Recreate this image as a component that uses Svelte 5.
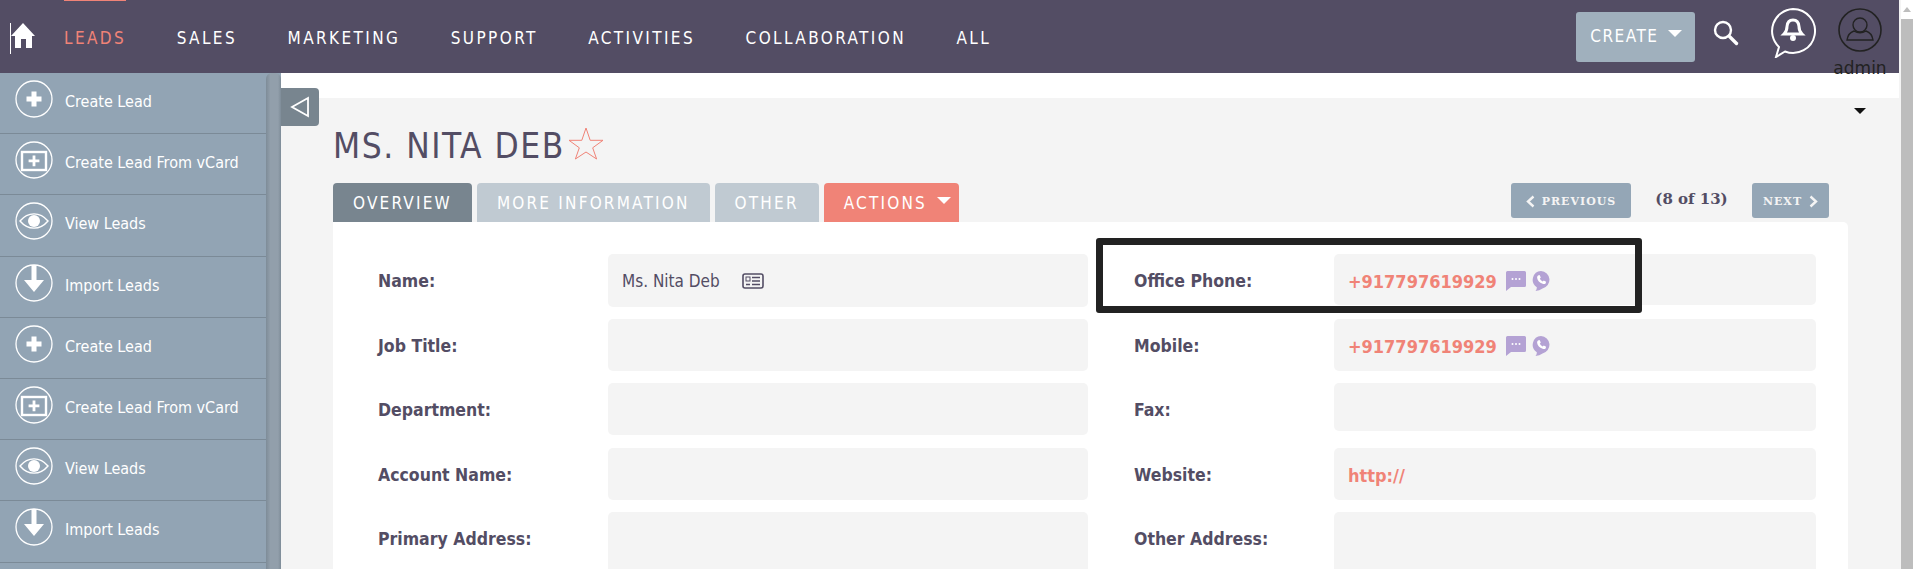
<script>
	const actions = [
		{ label: 'Create Lead', icon: 'plus' },
		{ label: 'Create Lead From vCard', icon: 'card' },
		{ label: 'View Leads', icon: 'eye' },
		{ label: 'Import Leads', icon: 'down' }
	];
	const sidebar = [...actions, ...actions];
	const nav = ['Leads', 'Sales', 'Marketing', 'Support', 'Activities', 'Collaboration', 'All'];
	const tabs = ['Overview', 'More Information', 'Other'];

	const phone = '+917797619929';
	const fields = [
		{ left: 'Name:', leftValue: 'Ms. Nita Deb', right: 'Office Phone:', rightValue: phone, leftH: 53, rightH: 51 },
		{ left: 'Job Title:', right: 'Mobile:', rightValue: phone, leftH: 52, rightH: 52 },
		{ left: 'Department:', right: 'Fax:', leftH: 52, rightH: 48 },
		{ left: 'Account Name:', right: 'Website:', rightValue: 'http://', leftH: 52, rightH: 52 },
		{ left: 'Primary Address:', right: 'Other Address:', leftH: 90, rightH: 90 }
	];
</script>

{#snippet sideIcon(kind)}
	<svg class="side-icon" viewBox="0 0 38 38" width="38" height="38">
		<circle cx="19" cy="19" r="18" fill="none" stroke="#fff" stroke-width="1.3" />
		{#if kind === 'plus'}
			<path d="M16.5 11.5h5v5h5v5h-5v5h-5v-5h-5v-5h5z" fill="#fff" />
		{:else if kind === 'card'}
			<rect x="7" y="11" width="24" height="18" fill="none" stroke="#fff" stroke-width="2.4" />
			<path d="M17.6 14.5h2.8v4h4v2.8h-4v4h-2.8v-4h-4v-2.8h4z" fill="#fff" />
		{:else if kind === 'eye'}
			<path d="M5 19c8-9.500 20-9.500 28 0c-8 9.500-20 9.500-28 0z" fill="none" stroke="#fff" stroke-width="1.4" />
			<circle cx="19" cy="19" r="6" fill="#fff" />
		{:else}
			<path d="M16.500 1h5v15h7.500l-10 12-10-12h7.500z" fill="#fff" />
		{/if}
	</svg>
{/snippet}

{#snippet contactIcons()}
	<svg viewBox="0 0 20 20" width="20" height="20" class="contact">
		<path d="M0 1.500Q0 0 1.500 0h17Q20 0 20 1.500v13q0 1.500-1.500 1.500H5l-5 4z" fill="#b4a2d4" />
		<circle cx="6.500" cy="8" r="1" fill="#fff" /><circle cx="10" cy="8" r="1" fill="#fff" /><circle cx="13.500" cy="8" r="1" fill="#fff" />
	</svg>
	<svg viewBox="0 0 18 20" width="18" height="20" class="contact">
		<path d="M9 0a8.800 8.800 0 0 1 1.500 17.400q-3 2.400-7 2.600q1.500-1.500 1.300-3.800A8.800 8.800 0 0 1 9 0z" fill="#b4a2d4" />
		<path d="M6 4.500l1.600-.4 1.200 2.500-1 1.100q.9 1.800 2.900 2.800l1.100-1 2.300 1.300-.5 1.600q-1.200 1-3 .4-4.800-1.800-5.500-6.100-.1-1.300.9-2.200z" fill="#fff" />
	</svg>
{/snippet}

<div class="screen">
	<div class="page">
		<header class="topbar">
			<svg class="home" viewBox="0 0 26 31" width="26" height="31">
				<path d="M.5 0v31" stroke="#fff" stroke-width="1" />
				<path d="M13 0L25 13h-3v12h-6v-9h-5v9H5V13H1z" fill="#fff" />
			</svg>
			<nav class="nav">
				{#each nav as item, i}
					<a class="nav-link" class:current={i === 0} href="#top">{item}</a>
				{/each}
			</nav>
			<div class="top-right">
				<button class="create">Create <span class="caret"></span></button>
				<svg class="search" viewBox="0 0 26 26" width="26" height="26">
					<circle cx="10" cy="10" r="8" fill="none" stroke="#fff" stroke-width="2.400" />
					<path d="M16.500 16.500l7 7" stroke="#fff" stroke-width="3.400" stroke-linecap="round" />
				</svg>
				<svg class="bell" viewBox="0 0 46 50" width="46" height="50">
					<path d="M23 1a22 22 0 1 1-8 42.500L6 49l3-10A22 22 0 0 1 23 1z" fill="none" stroke="#fff" stroke-width="2" />
					<path d="M23 12q5.500 0 6 6.500 0 4.500 3 7.500H14q3-3 3-7.500q.5-6.500 6-6.500z" fill="none" stroke="#fff" stroke-width="3" />
					<circle cx="23" cy="30" r="3" fill="#fff" />
				</svg>
				<div class="user">
					<svg viewBox="0 0 44 44" width="44" height="44">
						<circle cx="22" cy="22" r="21" fill="none" stroke="#222" stroke-width="1.600" />
						<circle cx="22" cy="17" r="7" fill="none" stroke="#222" stroke-width="1.400" />
						<path d="M9 32q1-7 7-9q6 3.500 12 0q6 2 7 9z" fill="none" stroke="#222" stroke-width="1.400" />
					</svg>
					<span class="user-name">admin</span>
				</div>
			</div>
		</header>

		<div class="body">
			<aside class="sidebar">
				<ul class="side-list">
					{#each sidebar as item}
						<li class="side-item">
							{@render sideIcon(item.icon)}
							<span>{item.label}</span>
						</li>
					{/each}
				</ul>
				<div class="side-scroll"></div>
			</aside>

			<main class="main">
				<button class="toggle" aria-label="Hide sidebar">
					<svg viewBox="0 0 20 22" width="20" height="22">
						<path d="M18 2v18L2 11z" fill="none" stroke="#fff" stroke-width="1.800" />
					</svg>
				</button>
				<div class="strip"></div>
				<span class="user-caret"></span>
				<h1 class="title">MS. NITA DEB<svg viewBox="0 0 36 33" width="36" height="33">
						<path d="M18 1l4.200 12.300H35l-10.300 7.500L28.600 32 18 25 7.400 32l3.900-11.200L1 13.300h12.800z" fill="none" stroke="#f08377" stroke-width="1" />
					</svg>
				</h1>
				<div class="tab-row">
					<div class="tabs">
						{#each tabs as tab, i}
							<button class="tab" class:active={i === 0}>{tab}</button>
						{/each}
						<button class="tab action">Actions <span class="caret"></span></button>
					</div>
					<div class="pager">
						<button class="pager-btn prev">
							<svg viewBox="0 0 9 13" width="9" height="13"><path d="M7.500 1.500L2 6.500l5.500 5" fill="none" stroke="#f4f4f4" stroke-width="2.400" /></svg>
							Previous
						</button>
						<span class="count">(8 of 13)</span>
						<button class="pager-btn next">
							Next
							<svg viewBox="0 0 9 13" width="9" height="13"><path d="M1.500 1.500L7 6.500l-5.500 5" fill="none" stroke="#f4f4f4" stroke-width="2.400" /></svg>
						</button>
					</div>
				</div>
				<section class="panel">
					<div class="highlight"></div>
					<div class="grid">
						{#each fields as row}
							<div class="label">{row.left}</div>
							<div class="value" style="height: {row.leftH}px">
								{#if row.leftValue}
									<span class="plain">{row.leftValue}</span>
									<svg class="vcard" viewBox="0 0 22 16" width="22" height="16">
										<rect x="1" y="1" width="20" height="14" rx="2" fill="none" stroke="#534d64" stroke-width="1.600" />
										<rect x="4" y="4" width="4" height="4" fill="none" stroke="#534d64" stroke-width="1" />
										<path d="M10 4.500h8M10 8h8M10 11.500h8M4 11.500h4" stroke="#534d64" stroke-width="1.400" />
									</svg>
								{/if}
							</div>
							<div class="label">{row.right}</div>
							<div class="value contact-value" style="height: {row.rightH}px">
								{#if row.rightValue === phone}
									<a class="link phone" href="#top">{phone}</a>
									{@render contactIcons()}
								{:else if row.rightValue}
									<a class="link" href="#top">{row.rightValue}</a>
								{/if}
							</div>
						{/each}
					</div>
				</section>
			</main>
		</div>
	</div>
	<div class="page-scroll">
		<span class="scroll-arrow"></span>
		<div class="scroll-thumb"></div>
	</div>
</div>

<style>
	:global(body) {
		margin: 0;
		background: #fff;
	}
	.screen {
		display: flex;
		height: 569px;
		overflow: hidden;
		font-family: "DejaVu Sans Condensed", "DejaVu Sans", sans-serif;
		font-stretch: condensed;
		color: #534d64;
	}
	.page {
		flex: 1;
		min-width: 0;
		display: flex;
		flex-direction: column;
		background: #f4f4f4;
	}
	.topbar {
		flex: none;
		height: 73px;
		margin-right: 2px;
		background: #534d64;
		display: flex;
		align-items: flex-start;
		position: relative;
		z-index: 2;
	}
	.home {
		margin: 23px 0 0 10px;
		flex: none;
	}
	.nav {
		display: flex;
		gap: 50.500px;
		margin-left: 28px;
	}
	.nav-link {
		color: #fff;
		text-decoration: none;
		text-transform: uppercase;
		font-size: 17px;
		letter-spacing: 2.400px;
		line-height: 76px;
		height: 73px;
		box-shadow: inset 0 1px 0 transparent;
	}
	.nav-link.current {
		color: #f08377;
		box-shadow: inset 0 1px 0 #f08377;
	}
	.top-right {
		margin-left: auto;
		display: flex;
		align-items: flex-start;
	}
	.create {
		margin-top: 12px;
		width: 119px;
		height: 50px;
		background: #a0b0bd;
		border: 0;
		border-radius: 3px;
		color: #fff;
		font-family: inherit;
		font-stretch: condensed;
		font-size: 17px;
		line-height: 44px;
		letter-spacing: 1.500px;
		text-transform: uppercase;
		padding: 0 0 2px 1px;
		white-space: nowrap;
	}
	.caret {
		display: inline-block;
		vertical-align: 5px;
		margin-left: 3px;
		border: 7px solid transparent;
		border-top-color: #fff;
		border-bottom: 0;
	}
	.search {
		margin: 20px 0 0 18px;
	}
	.bell {
		margin: 8px 0 0 31px;
	}
	.user {
		display: flex;
		flex-direction: column;
		align-items: center;
		width: 60px;
		margin: 8px 9px 0 14px;
	}
	.user-name {
		color: #222;
		font-family: "DejaVu Sans", sans-serif;
		font-stretch: normal;
		font-size: 17px;
		line-height: 22px;
		margin-top: 5px;
	}
	.body {
		flex: 1;
		min-height: 0;
		display: flex;
	}
	.sidebar {
		flex: none;
		width: 281px;
		display: flex;
		background: #92a4b4;
	}
	.side-list {
		list-style: none;
		margin: 0;
		padding: 0;
		width: 266px;
	}
	.side-item {
		height: 61.200px;
		box-sizing: border-box;
		border-bottom: 1.500px solid #7b8a97;
		padding: 7px 0 0 15px;
		display: flex;
		align-items: flex-start;
		gap: 12px;
		color: #fff;
		font-size: 16px;
	}
	.side-item span {
		line-height: 43px;
	}
	.side-icon {
		flex: none;
	}
	.side-scroll {
		flex: 1;
		background: linear-gradient(90deg, #7e8c98, #929fab 30%, #929fab 80%, #7e8c98);
		border-radius: 6px 6px 0 0;
	}
	.main {
		flex: 1;
		min-width: 0;
		position: relative;
		padding: 0 0 0 52px;
		margin-right: 2px;
	}
	.strip {
		height: 25px;
		margin-left: -52px;
		background: #fff;
	}
	.toggle {
		position: absolute;
		left: 0;
		top: 15px;
		width: 38px;
		height: 38px;
		border: 0;
		padding: 0;
		border-radius: 0 4px 4px 0;
		background: #78858f;
		display: flex;
		align-items: center;
		justify-content: center;
	}
	.user-caret {
		position: absolute;
		left: 1573px;
		top: 35px;
		border: 6px solid transparent;
		border-top-color: #111;
		border-bottom: 0;
	}
	.title {
		margin: 0;
		height: 85px;
		box-sizing: border-box;
		padding-top: 26px;
		font-size: 35px;
		font-weight: 400;
		line-height: 44px;
		letter-spacing: 1.500px;
		display: flex;
		align-items: flex-start;
		white-space: pre;
	}
	.title svg {
		margin: 3px 0 0 3px;
	}
	.tab-row {
		display: flex;
		justify-content: space-between;
		height: 39px;
		padding-right: 70px;
	}
	.tabs {
		display: flex;
		gap: 5px;
	}
	.tab {
		border: 0;
		border-radius: 4px 4px 0 0;
		height: 39px;
		padding: 0 20px;
		background: #c0cad2;
		color: #fff;
		font-family: inherit;
		font-stretch: condensed;
		font-size: 17px;
		letter-spacing: 2.200px;
		text-transform: uppercase;
		white-space: nowrap;
	}
	.tab.active {
		background: #78858f;
	}
	.tab.action {
		background: #f08377;
		padding: 0 8px 0 20px;
	}
	.pager {
		display: flex;
		align-items: flex-start;
	}
	.pager-btn {
		height: 35px;
		border: 0;
		border-radius: 3px;
		background: #94a6b6;
		color: #f4f4f4;
		font: bold 11px "DejaVu Serif", serif;
		letter-spacing: 1px;
		text-transform: uppercase;
		padding: 2px 0 0;
		white-space: nowrap;
		display: flex;
		align-items: center;
		justify-content: center;
		gap: 7px;
	}
	.prev {
		width: 120px;
	}
	.next {
		width: 77px;
	}
	.count {
		width: 121px;
		text-align: center;
		font: bold 15px/32px "DejaVu Serif", serif;
	}
	.panel {
		position: relative;
		width: 1515px;
		height: 347px;
		box-sizing: border-box;
		background: #fff;
		border-radius: 0 5px 0 0;
		padding: 32px 0 0 45px;
		overflow: hidden;
	}
	.highlight {
		position: absolute;
		left: 763px;
		top: 16px;
		width: 546px;
		height: 75px;
		box-sizing: border-box;
		border: 7px solid #222;
		border-radius: 3px;
	}
	.grid {
		display: grid;
		grid-template-columns: 230px 480px 246px 482px;
		grid-auto-rows: 64.500px;
		align-items: start;
	}
	.grid > :nth-child(4n + 3) {
		margin-left: 46px;
	}
	.label {
		font-size: 17.500px;
		font-weight: 700;
		line-height: 54px;
	}
	.value {
		background: #f4f4f4;
		border-radius: 5px;
		display: flex;
		align-items: center;
		padding-left: 14px;
		box-sizing: border-box;
	}
	.contact-value {
		padding-top: 3px;
	}
	.plain {
		font-size: 17px;
		margin-right: 22px;
	}
	.link {
		color: #f08377;
		font-weight: 700;
		font-size: 18px;
		text-decoration: none;
	}
	.phone {
		margin-right: 9px;
	}
	.contact {
		margin-right: 6px;
	}
	.page-scroll {
		flex: none;
		width: 12px;
		background: #fff;
		position: relative;
	}
	.scroll-arrow {
		position: absolute;
		left: 2px;
		top: 7px;
		border: 4px solid transparent;
		border-bottom: 5px solid #bdbdbd;
		border-top: 0;
	}
	.scroll-thumb {
		margin-top: 19px;
		height: 550px;
		background: #bdbdbd;
	}
</style>
